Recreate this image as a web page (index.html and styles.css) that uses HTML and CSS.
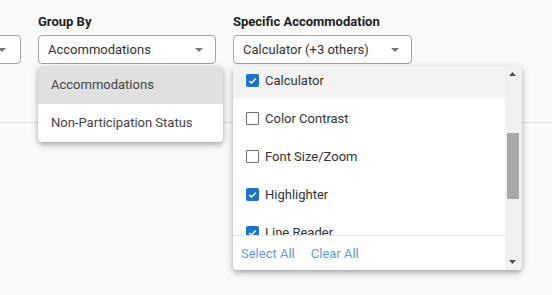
FILE: index.html
```html
<!DOCTYPE html>
<html lang="en">
<head>
<meta charset="utf-8">
<title>Filters</title>
<link rel="stylesheet" href="styles.css">
</head>
<body>
<div class="page">
  <div class="filters">
    <div class="field">
      <div class="label">&nbsp;</div>
      <div class="select"><span class="select-text"></span><span class="caret"></span></div>
    </div>
    <div class="field">
      <div class="label">Group By</div>
      <div class="select"><span class="select-text">Accommodations</span><span class="caret"></span></div>
      <div class="menu menu-single">
        <div class="menu-item active">Accommodations</div>
        <div class="menu-item">Non-Participation Status</div>
      </div>
    </div>
    <div class="field">
      <div class="label">Specific Accommodation</div>
      <div class="select"><span class="select-text">Calculator (+3 others)</span><span class="caret"></span></div>
      <div class="menu menu-multi">
        <div class="menu-main">
          <div class="options">
            <div class="options-inner">
              <div class="option hover"><span class="cb checked"><svg viewBox="0 0 13 13" width="13" height="13"><path d="M3.2 6.9 L5.5 9.1 L9.9 4.4" fill="none" stroke="#fff" stroke-width="1.4"/></svg></span><span>Calculator</span></div>
              <div class="option"><span class="cb"></span><span>Color Contrast</span></div>
              <div class="option"><span class="cb"></span><span>Font Size/Zoom</span></div>
              <div class="option"><span class="cb checked"><svg viewBox="0 0 13 13" width="13" height="13"><path d="M3.2 6.9 L5.5 9.1 L9.9 4.4" fill="none" stroke="#fff" stroke-width="1.4"/></svg></span><span>Highlighter</span></div>
              <div class="option"><span class="cb checked"><svg viewBox="0 0 13 13" width="13" height="13"><path d="M3.2 6.9 L5.5 9.1 L9.9 4.4" fill="none" stroke="#fff" stroke-width="1.4"/></svg></span><span>Line Reader</span></div>
            </div>
          </div>
          <div class="menu-footer">
            <a class="link">Select All</a>
            <a class="link">Clear All</a>
          </div>
        </div>
        <div class="scrollbar">
          <div class="sb-btn"><svg width="7" height="4" viewBox="0 0 7 4"><polygon points="3.5,0 7,4 0,4" fill="#505050"/></svg></div>
          <div class="sb-track"><div class="sb-thumb"></div></div>
          <div class="sb-btn"><svg width="7" height="4" viewBox="0 0 7 4"><polygon points="0,0 7,0 3.5,4" fill="#505050"/></svg></div>
        </div>
      </div>
    </div>
  </div>
  <div class="divider"></div>
</div>
</body>
</html>
```

FILE: styles.css
```css
html, body {
  margin: 0;
  padding: 0;
  background: #fafafa;
  font-family: Roboto, "Liberation Sans", Arial, sans-serif;
  color: #333;
  overflow: hidden;
}
.page {
  width: 552px;
  height: 295px;
  overflow: hidden;
}
.filters {
  display: flex;
  gap: 17px;
  margin-left: -157px;
  padding-top: 14px;
}
.field {
  position: relative;
  width: 178px;
  display: flex;
  flex-direction: column;
}
.field:last-child {
  width: 179px;
}
.label {
  font-size: 13px;
  font-weight: 700;
  line-height: 16px;
  height: 16px;
  margin-bottom: 5px;
  color: #222;
  white-space: nowrap;
}
.select {
  box-sizing: border-box;
  height: 29px;
  background: #fff;
  border: 1px solid #a3a3a3;
  border-radius: 4px;
  display: flex;
  align-items: center;
  justify-content: space-between;
  padding: 0 12px 0 9px;
  font-size: 13px;
  color: #333;
}
.field:first-child .select {
  padding-right: 14px;
}
.caret {
  width: 0;
  height: 0;
  border-left: 4px solid transparent;
  border-right: 4px solid transparent;
  border-top: 4px solid #777;
  margin-top: 1px;
}
.divider {
  margin-top: 58px;
  height: 1px;
  background: #dedede;
}
.menu {
  position: absolute;
  top: 52px;
  left: 0;
  background: #fff;
  border-radius: 4px;
  box-shadow: 0 2px 4px -1px rgba(0,0,0,.2), 0 4px 6px 0 rgba(0,0,0,.14), 0 1px 10px 0 rgba(0,0,0,.12);
  overflow: hidden;
  z-index: 2;
}
.menu-single {
  width: 185px;
  top: 52px;
}
.menu-item {
  height: 38px;
  line-height: 38px;
  padding-left: 13px;
  font-size: 13px;
  color: #444;
  white-space: nowrap;
}
.menu-item.active {
  background: #e0e0e0;
}
.menu-multi {
  width: 289px;
  height: 204px;
  display: flex;
}
.menu-main {
  flex: 1;
  display: flex;
  flex-direction: column;
  min-width: 0;
}
.options {
  flex: 1;
  overflow: hidden;
}
.options-inner {
  margin-top: -5px;
}
.option {
  height: 38px;
  display: flex;
  align-items: center;
  padding-left: 13px;
  gap: 6px;
  font-size: 13px;
  color: #333;
}
.option.hover {
  background: #f3f3f3;
}
.cb {
  box-sizing: border-box;
  width: 13px;
  height: 13px;
  border: 1px solid #6f6f6f;
  border-radius: 1px;
  background: #fff;
  display: flex;
  flex: none;
}
.cb.checked {
  border: none;
  background: #1b74c7;
  border-radius: 2px;
}
.menu-footer {
  height: 35px;
  box-sizing: border-box;
  border-top: 1px solid #e2e2e2;
  display: flex;
  align-items: center;
  gap: 16px;
  padding-left: 8px;
  font-size: 13px;
}
.link {
  color: #5b9de3;
}
.scrollbar {
  width: 17px;
  background: #f1f1f1;
  display: flex;
  flex-direction: column;
}
.sb-btn {
  height: 16px;
  display: flex;
  align-items: center;
  justify-content: center;
}
.sb-btn svg {
  display: block;
  margin-left: -2px;
}
.sb-track {
  flex: 1;
  padding: 0 3px 0 2px;
}
.sb-thumb {
  margin-top: 51px;
  height: 66px;
  background: #a8a8a8;
}
```
